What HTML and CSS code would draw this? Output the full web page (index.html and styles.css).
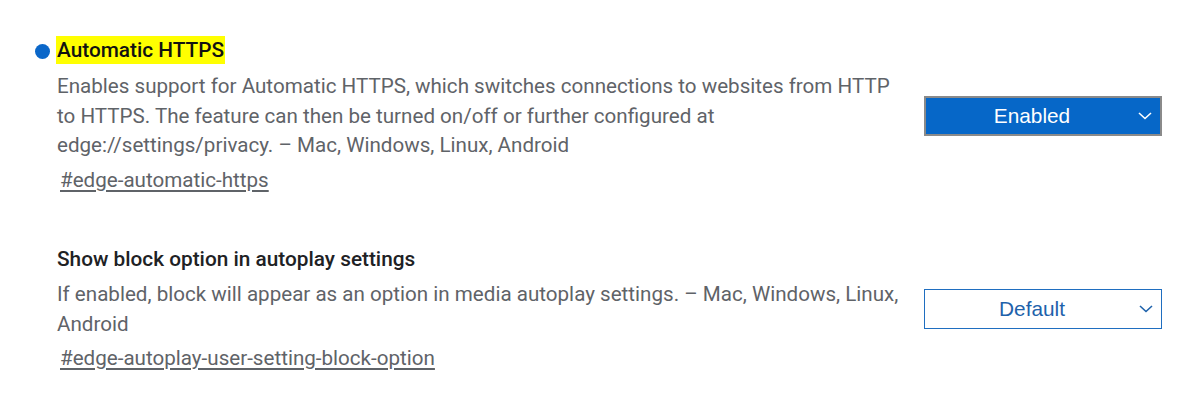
FILE: index.html
```html
<!DOCTYPE html>
<html>
<head>
<meta charset="utf-8">
<link rel="stylesheet" href="styles.css">
</head>
<body>
<div class="page">
  <div class="experiment">
    <div class="info">
      <div class="title-row">
        <span class="dot"></span>
        <h3 class="title highlight">Automatic HTTPS</h3>
      </div>
      <p class="desc">Enables support for Automatic HTTPS, which switches connections to websites from HTTP to HTTPS. The feature can then be turned on/off or further configured at edge://settings/privacy. – Mac, Windows, Linux, Android</p>
      <a class="link">#edge-automatic-https</a>
    </div>
    <div class="select enabled">
      <span class="select-text">Enabled</span>
      <svg class="chev" width="14" height="8" viewBox="0 0 14 8"><path d="M1 1 L7 6.5 L13 1" fill="none" stroke="currentColor" stroke-width="1.6"/></svg>
    </div>
  </div>
  <div class="experiment second">
    <div class="info">
      <div class="title-row">
        <h3 class="title">Show block option in autoplay settings</h3>
      </div>
      <p class="desc">If enabled, block will appear as an option in media autoplay settings. – Mac, Windows, Linux, Android</p>
      <a class="link">#edge-autoplay-user-setting-block-option</a>
    </div>
    <div class="select default">
      <span class="select-text">Default</span>
      <svg class="chev" width="14" height="8" viewBox="0 0 14 8"><path d="M1 1 L7 6.5 L13 1" fill="none" stroke="currentColor" stroke-width="1.6"/></svg>
    </div>
  </div>
</div>
</body>
</html>
```
FILE: styles.css
```css
html, body {
  margin: 0;
  padding: 0;
  background: #ffffff;
}
body {
  font-family: Roboto, "Liberation Sans", Arial, sans-serif;
  color: #202124;
}
.page {
  padding: 36px 38px 0 57px;
  display: flex;
  flex-direction: column;
  gap: 50px;
}
.experiment {
  display: flex;
  align-items: center;
  justify-content: space-between;
}
.info {
  width: 850px;
  display: flex;
  flex-direction: column;
}
.title-row {
  display: flex;
  align-items: center;
  gap: 6px;
  margin-left: -22px;
}
.second .title-row {
  margin-left: 0;
}
.dot {
  width: 15px;
  height: 15px;
  border-radius: 50%;
  background: #0b67c9;
  margin-top: 2px;
}
.title {
  margin: 0;
  font-size: 20.8px;
  font-weight: 500;
  line-height: 28px;
  color: #202124;
}
.highlight {
  background: #ffff00;
  padding: 0 1px;
  color: #111;
}
.desc {
  margin: 8px 0 0 0;
  font-size: 20.6px;
  line-height: 29.7px;
  color: #5f6368;
}
.second .desc {
  margin-top: 7px;
}
.link {
  margin: 4px 0 0 3px;
  font-size: 20.6px;
  line-height: 30px;
  color: #5f6368;
  text-decoration: underline;
  text-underline-offset: 3px;
}
.second .link {
  margin-top: 3px;
}
.select {
  width: 238px;
  height: 40px;
  box-sizing: border-box;
  display: flex;
  align-items: center;
  font-family: "Liberation Sans", Arial, sans-serif;
  font-size: 20.8px;
}
.select-text {
  flex: 1;
  text-align: center;
}
.chev {
  margin-right: 8px;
}
.enabled {
  background: #0667c8;
  border: 2px solid #8a8a8a;
  color: #ffffff;
}
.default {
  background: #ffffff;
  border: 1px solid #1f6ec0;
  color: #1e62ab;
}
```
